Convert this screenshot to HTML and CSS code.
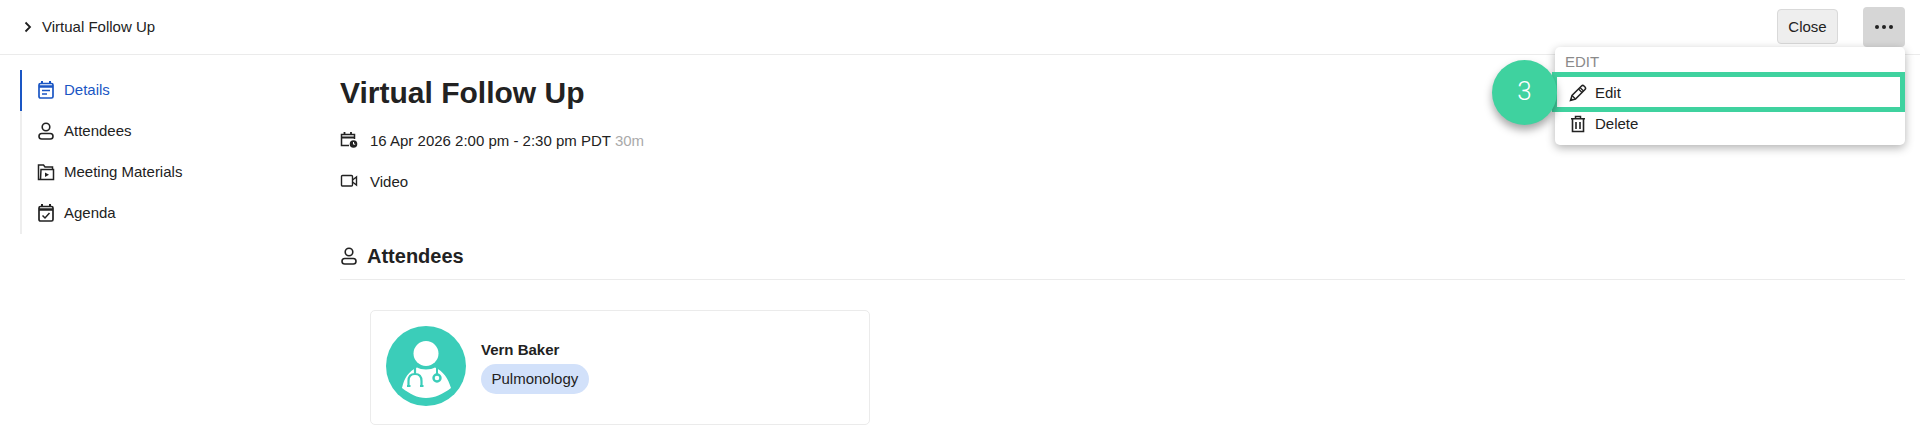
FILE: index.html
```html
<!DOCTYPE html>
<html lang="en">
<head>
<meta charset="utf-8">
<title>Virtual Follow Up</title>
<link rel="stylesheet" href="styles.css">
</head>
<body>
<div class="page">
  <header class="topbar">
    <div class="crumb">
      <svg class="chev" width="10" height="12" viewBox="0 0 10 12"><path d="M2.500 1.500 7 6l-4.500 4.500" fill="none" stroke="#1f1f1f" stroke-width="1.800"/></svg>
      <span>Virtual Follow Up</span>
    </div>
    <div class="actions">
      <button class="btn-close">Close</button>
      <button class="btn-more"><span class="dot"></span><span class="dot"></span><span class="dot"></span></button>
    </div>
  </header>
  <div class="body">
    <nav class="sidenav">
      <a class="navitem active">
        <svg class="ico" width="18" height="20" viewBox="0 0 18 20"><path d="M5 1v3M13 1v3" stroke="#1a56c4" stroke-width="2" fill="none"/><rect x="2" y="3.500" width="14" height="14.500" rx="1.500" fill="none" stroke="#1a56c4" stroke-width="1.700"/><path d="M2 6.500h14" stroke="#1a56c4" stroke-width="2.500"/><path d="M5 10.500h8M5 14h5" stroke="#1a56c4" stroke-width="1.500"/></svg>
        <span>Details</span>
      </a>
      <a class="navitem">
        <svg class="ico" width="18" height="20" viewBox="0 0 18 20"><circle cx="9" cy="6" r="3.800" fill="none" stroke="#222" stroke-width="1.600"/><rect x="2" y="12.500" width="14" height="5.500" rx="2.700" fill="none" stroke="#222" stroke-width="1.600"/></svg>
        <span>Attendees</span>
      </a>
      <a class="navitem">
        <svg class="ico" width="18" height="20" viewBox="0 0 18 20"><path d="M3.500 17.500H1.500V3h5l1.500 2h7.500v2M3.500 17.500 4 7.500h12.500v10z" fill="none" stroke="#222" stroke-width="1.500"/><path d="M8 10.500v4.500l4-2.200z" fill="#222"/></svg>
        <span>Meeting Materials</span>
      </a>
      <a class="navitem">
        <svg class="ico" width="18" height="20" viewBox="0 0 18 20"><path d="M5 1v3M13 1v3" stroke="#222" stroke-width="2" fill="none"/><rect x="2" y="3.500" width="14" height="14.500" rx="1.500" fill="none" stroke="#222" stroke-width="1.700"/><path d="M2 6.500h14" stroke="#222" stroke-width="2.500"/><path d="m5.500 12.500 2.500 2.500 4.500-5" stroke="#222" stroke-width="1.500" fill="none"/></svg>
        <span>Agenda</span>
      </a>
    </nav>
    <main class="content">
      <h1 class="title">Virtual Follow Up</h1>
      <div class="meta meta-date">
        <svg class="meta-ico" width="18" height="18" viewBox="0 0 18 18"><path d="M4.500 1v3M11 1v3" stroke="#222" stroke-width="1.800" fill="none"/><path d="M9 14.500H1.500V3.500h13V8" fill="none" stroke="#222" stroke-width="1.500"/><path d="M1.500 6.500h13" stroke="#222" stroke-width="2"/><circle cx="13.500" cy="13" r="3.800" fill="#222"/><path d="M13.500 11v2.200h1.700" stroke="#fff" stroke-width="1" fill="none"/></svg>
        <span>16 Apr 2026 2:00 pm - 2:30 pm PDT <span class="muted">30m</span></span>
      </div>
      <div class="meta meta-video">
        <svg class="meta-ico" width="18" height="18" viewBox="0 0 18 18"><rect x="1.500" y="3.500" width="11" height="10.500" rx="1" fill="none" stroke="#222" stroke-width="1.400"/><path d="m12.500 8 4-3v8l-4-3" fill="none" stroke="#222" stroke-width="1.400"/></svg>
        <span>Video</span>
      </div>
      <section class="attendees">
        <h2 class="section-head">
          <svg width="18" height="20" viewBox="0 0 18 20"><circle cx="9" cy="6" r="3.800" fill="none" stroke="#222" stroke-width="1.600"/><rect x="2" y="12.500" width="14" height="5.500" rx="2.700" fill="none" stroke="#222" stroke-width="1.600"/></svg>
          <span>Attendees</span>
        </h2>
        <div class="card">
          <svg class="avatar" width="80" height="80" viewBox="0 0 80 80">
            <circle cx="40" cy="40" r="40" fill="#3bcdb9"/>
            <circle cx="40" cy="27.500" r="12.500" fill="#fff"/>
            <path d="M16 62C18 52 23 45 31 41.500c4 2.500 14 2.500 18 0C57 45 62 52 65 62c-8 6-16 10-25 10S24 68 16 62z" fill="#fff"/>
            <path d="M22.500 60v-5c0-5 3-7 6.500-7s6.500 2 6.500 7v5M21 60h3.500M34 60h3.500M29 48v-6" fill="none" stroke="#3bcdb9" stroke-width="2.200"/>
            <path d="M51 42v6" stroke="#3bcdb9" stroke-width="2"/>
            <circle cx="51" cy="52" r="3.500" fill="#fff" stroke="#3bcdb9" stroke-width="2.400"/>
          </svg>
          <div class="person">
            <div class="name">Vern Baker</div>
            <span class="pill">Pulmonology</span>
          </div>
        </div>
      </section>
    </main>
  </div>

  <div class="menu">
    <div class="menu-label">EDIT</div>
    <div class="menu-item">
      <svg width="18" height="18" viewBox="0 0 18 18"><path d="M1.500 16.500 3 11.500 12.500 2a1.800 1.800 0 0 1 2.500 0l1 1a1.800 1.800 0 0 1 0 2.500L6.500 15z" fill="none" stroke="#222" stroke-width="1.500"/><path d="m3 11.500 3.500 3.500M11 3.500l3.500 3.500M9.500 5 13 8.500" stroke="#222" stroke-width="1.300" fill="none"/><path d="M1.500 16.500 2.300 13.800 4.200 15.700z" fill="#222"/></svg>
      <span>Edit</span>
    </div>
    <div class="menu-item">
      <svg width="18" height="18" viewBox="0 0 18 18"><path d="M2 3.800h14M6.500 3.500V1.500h5v2" fill="none" stroke="#222" stroke-width="1.500"/><path d="M3.500 4v12.500h11V4" fill="none" stroke="#222" stroke-width="1.600"/><path d="M7 7v7M11 7v7" stroke="#222" stroke-width="1.600"/></svg>
      <span>Delete</span>
    </div>
  </div>
  <div class="highlight"></div>
  <div class="step">3</div>
</div>
</body>
</html>
```
FILE: styles.css
```css
* { box-sizing: border-box; }
html, body { margin: 0; padding: 0; background: #fff; }
body { font-family: "Liberation Sans", Arial, sans-serif; font-size: 15px; color: #222; overflow: hidden; }
.page { position: relative; width: 1920px; height: 448px; overflow: hidden; }

.topbar { height: 55px; border-bottom: 1px solid #ebebeb; display: flex; align-items: center; justify-content: space-between; padding: 0 15px 1px 23px; }
.crumb { display: flex; align-items: center; gap: 9px; font-size: 15px; color: #222; }
.chev { display: block; }
.actions { display: flex; align-items: center; gap: 25px; }
.btn-close { width: 61px; height: 35px; background: #eee; border: 1px solid #d9d9d9; border-radius: 4px; font: 15px "Liberation Sans", Arial, sans-serif; color: #222; padding: 0; }
.btn-more { width: 42px; height: 40px; background: #d6d6d6; border: 0; border-radius: 4px; display: flex; align-items: center; justify-content: center; gap: 3px; padding: 0; }
.dot { width: 4px; height: 4px; border-radius: 50%; background: #222; }

.body { display: flex; }
.sidenav { margin: 15px 0 0 20px; flex: none; width: 300px; }
.navitem { display: flex; align-items: center; gap: 9px; height: 41px; padding: 0 0 2px 15px; border-left: 2px solid #eee; font-size: 15px; color: #222; }
.navitem.active { border-left-color: #1a56c4; color: #1a56c4; }
.ico { display: block; flex: none; }

.content { flex: 1; padding: 0 15px 0 20px; }
.title { margin: 19px 0 0; font-size: 30px; line-height: 38px; font-weight: 700; color: #222; }
.meta { display: flex; align-items: center; gap: 12px; font-size: 15px; height: 20px; }
.meta-date { margin-top: 18px; }
.meta-video { margin-top: 21px; }
.meta-ico { display: block; flex: none; }
.muted { color: #aaa; }

.attendees { margin-top: 52px; }
.section-head { display: flex; align-items: center; gap: 9px; margin: 0; height: 37px; padding-bottom: 10px; font-size: 20px; font-weight: 700; color: #222; border-bottom: 1px solid #ebebeb; }
.card { display: flex; align-items: center; gap: 15px; margin: 30px 0 0 30px; width: 500px; height: 115px; padding: 0 0 3px 15px; border: 1px solid #ebebeb; border-radius: 5px; }
.avatar { display: block; flex: none; }
.person { margin-top: 2px; }
.name { font-size: 15px; font-weight: 700; color: #222; line-height: 18px; }
.pill { display: inline-block; margin-top: 5px; height: 30px; line-height: 30px; padding: 0 10.500px; border-radius: 15px; background: #d2e1fa; font-size: 15px; color: #222; }

.menu { position: absolute; left: 1555px; top: 47px; width: 350px; height: 98px; background: #fff; border-radius: 5px; box-shadow: 0 3px 10px rgba(0,0,0,.3); padding-top: 3px; }
.menu-label { height: 20px; line-height: 24px; padding-left: 10px; font-size: 15px; color: #8a8a8a; }
.menu-item { display: flex; align-items: center; gap: 8px; height: 31px; padding-left: 14px; font-size: 15px; color: #222; }
.menu-item svg { display: block; flex: none; }
.menu-label + .menu-item { margin-top: 7px; }
.highlight { position: absolute; left: 1552px; top: 72px; width: 353px; height: 40px; border: 5px solid #3fd29f; }
.step { position: absolute; left: 1492px; top: 60px; width: 65px; height: 65px; border-radius: 50%; background: #3fd29f; color: #fff; font: 300 26px/63px Roboto, sans-serif; text-align: center; box-shadow: 0 5px 8px rgba(0,0,0,.35); }
```
